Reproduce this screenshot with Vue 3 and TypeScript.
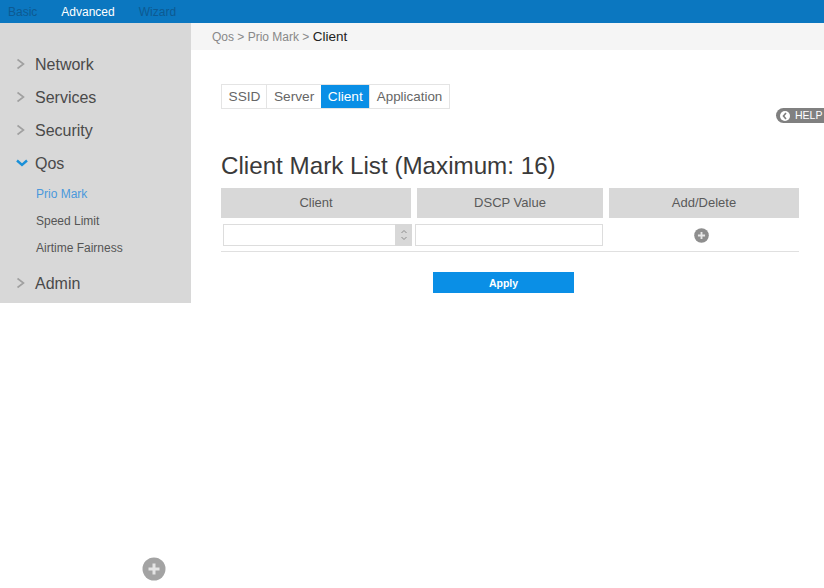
<script setup lang="ts">
const menu = [
  { label: 'Network', open: false },
  { label: 'Services', open: false },
  { label: 'Security', open: false },
  { label: 'Qos', open: true, subs: ['Prio Mark', 'Speed Limit', 'Airtime Fairness'] },
  { label: 'Admin', open: false },
]
const tabs = ['SSID', 'Server', 'Client', 'Application']
const columns = ['Client', 'DSCP Value', 'Add/Delete']
</script>

<template>
  <div class="page">
    <header class="topbar">
      <span class="top dim">Basic</span>
      <span class="top on">Advanced</span>
      <span class="top dim">Wizard</span>
    </header>
    <div class="body">
      <aside class="side">
        <template v-for="m in menu" :key="m.label">
          <div class="item">
            <svg class="chev" width="10" height="12" viewBox="0 0 10 12" v-if="!m.open">
              <path d="M1.5 1.5 L7.5 6 L1.5 10.5" fill="none" stroke="#a0a0a0" stroke-width="1.6" />
            </svg>
            <svg class="chev" width="12" height="12" viewBox="0 0 12 12" v-else>
              <path d="M1 3.5 L6 8 L11 3.5" fill="none" stroke="#1a90d8" stroke-width="2.4" />
            </svg>
            <span>{{ m.label }}</span>
          </div>
          <div v-if="m.subs" class="subs">
            <div v-for="(s, i) in m.subs" :key="s" class="sub" :class="{ active: i === 0 }">{{ s }}</div>
          </div>
        </template>
      </aside>
      <main class="main">
        <div class="crumb">
          <span>Qos &gt; Prio Mark &gt; </span><span class="cur">Client</span>
        </div>
        <div class="content">
          <nav class="tabs">
            <span v-for="t in tabs" :key="t" class="tab" :class="{ sel: t === 'Client' }">{{ t }}</span>
          </nav>
          <h1 class="title">Client Mark List (Maximum: 16)</h1>
          <div class="grid heads">
            <div v-for="c in columns" :key="c" class="head">{{ c }}</div>
          </div>
          <div class="grid row">
            <div class="field combo">
              <span class="spin">
                <svg width="8" height="14" viewBox="0 0 8 14">
                  <path d="M1.5 5 L4 2.5 L6.5 5 M1.5 9 L4 11.5 L6.5 9" fill="none" stroke="#8c8c8c" stroke-width="1" />
                </svg>
              </span>
            </div>
            <div class="field"></div>
            <div class="act">
              <svg width="15" height="15" viewBox="0 0 16 16">
                <circle cx="8" cy="8" r="7.8" fill="#8e8e8e" />
                <path d="M8 4.2 V11.8 M4.2 8 H11.8" stroke="#e8e8e8" stroke-width="2" />
              </svg>
            </div>
          </div>
          <div class="actions"><button class="apply">Apply</button></div>
        </div>
      </main>
    </div>
    <div class="help">
      <span class="help-ic">
        <svg width="10" height="10" viewBox="0 0 10 10">
          <path d="M6 2 L3.5 5 L6 8" fill="none" stroke="#7d7d7d" stroke-width="1.6" />
        </svg>
      </span>
      HELP
    </div>
    <svg class="float-add" width="24" height="24" viewBox="0 0 24 24">
      <circle cx="12" cy="12" r="11.5" fill="#a3a3a3" />
      <path d="M12 6.5 V17.5 M6.5 12 H17.5" stroke="#e4e4e4" stroke-width="3" />
    </svg>
  </div>
</template>

<style>
html, body { margin: 0; background: #fff; }
</style>

<style scoped>
.page {
  position: relative;
  width: 824px;
  height: 588px;
  overflow: hidden;
  font-family: "Liberation Sans", Arial, sans-serif;
  color: #444;
}
.topbar {
  height: 23px;
  background: #0b77c0;
  display: flex;
  align-items: center;
  padding-left: 8px;
  gap: 24px;
  font-size: 12px;
}
.top.dim { color: #0d5a92; }
.top.on { color: #fff; }
.body { display: flex; align-items: flex-start; }
.side {
  width: 191px;
  height: 280px;
  background: #d8d8d8;
  padding-top: 25px;
  box-sizing: border-box;
}
.item {
  height: 33px;
  display: flex;
  align-items: center;
  font-size: 16px;
  color: #4a4a4a;
  position: relative;
  padding-left: 35px;
}
.chev { position: absolute; left: 16px; top: 10px; }
.subs { padding: 1px 0 5px; }
.sub {
  height: 27px;
  line-height: 27px;
  padding-left: 36px;
  font-size: 12px;
  color: #555;
}
.sub.active { color: #4a98dc; }
.main { flex: 1; min-width: 0; }
.crumb {
  height: 27px;
  background: #f5f5f5;
  line-height: 27px;
  padding-left: 21px;
  font-size: 12px;
  color: #888;
}
.cur { color: #222; font-size: 13.5px; }
.content { padding: 34px 25px 0 30px; }
.tabs { display: inline-flex; border: 1px solid #e4e4e4; height: 23px; }
.tab {
  font-size: 13.7px;
  line-height: 23px;
  padding: 0 6.5px;
  color: #666;
  border-left: 1px solid #e4e4e4;
}
.tab:first-child { border-left: 0; padding-right: 5.5px; }
.tab:nth-child(2) { padding: 0 7px; }
.tab:last-child { font-size: 13.4px; }
.tab.sel { background: #0a8fe6; color: #fff; border-left: 0; }
.title {
  margin: 41px 0 0;
  height: 34px;
  font-size: 24.2px;
  font-weight: 400;
  line-height: 31px;
  color: #3a3a3a;
}
.grid { display: grid; grid-template-columns: 190px 186px 190px; column-gap: 6px; }
.head {
  margin-top: 4px;
  height: 30px;
  line-height: 30px;
  background: #d8d8d8;
  text-align: center;
  font-size: 13px;
  color: #5a5a5a;
}
.row {
  grid-template-columns: 190px 188px 189px;
  column-gap: 4px;
  padding-top: 6px;
  height: 27px;
  box-sizing: content-box;
  border-bottom: 1px solid #e0e0e0;
  width: 578px;
}
.field {
  height: 20px;
  border: 1px solid #ddd;
  box-sizing: content-box;
  position: relative;
}
.combo { margin-left: 2px; width: 187px; }
.row .field:nth-child(2) { width: 186px; }
.spin {
  position: absolute;
  right: -1px;
  top: -1px;
  width: 17px;
  height: 22px;
  background: #d8d8d8;
  display: flex;
  align-items: center;
  justify-content: center;
}
.act { display: flex; justify-content: center; padding-top: 4px; }
.actions { display: flex; padding-left: 212px; margin-top: 20px; }
.apply {
  width: 141px;
  height: 21px;
  border: 0;
  padding: 0;
  background: #0a8fe6;
  color: #fff;
  font: 700 10.5px "Liberation Sans", Arial, sans-serif;
}
.help {
  position: absolute;
  left: 776px;
  top: 108px;
  width: 48px;
  height: 15px;
  background: #808080;
  border-radius: 8px 0 0 8px;
  color: #fff;
  font-size: 10.5px;
  line-height: 15px;
  display: flex;
  align-items: center;
  gap: 5px;
  padding-left: 4px;
  box-sizing: border-box;
}
.help-ic {
  width: 10px;
  height: 10px;
  background: #fff;
  border-radius: 50%;
  display: inline-flex;
}
.float-add { position: absolute; left: 142px; top: 557px; }
</style>
